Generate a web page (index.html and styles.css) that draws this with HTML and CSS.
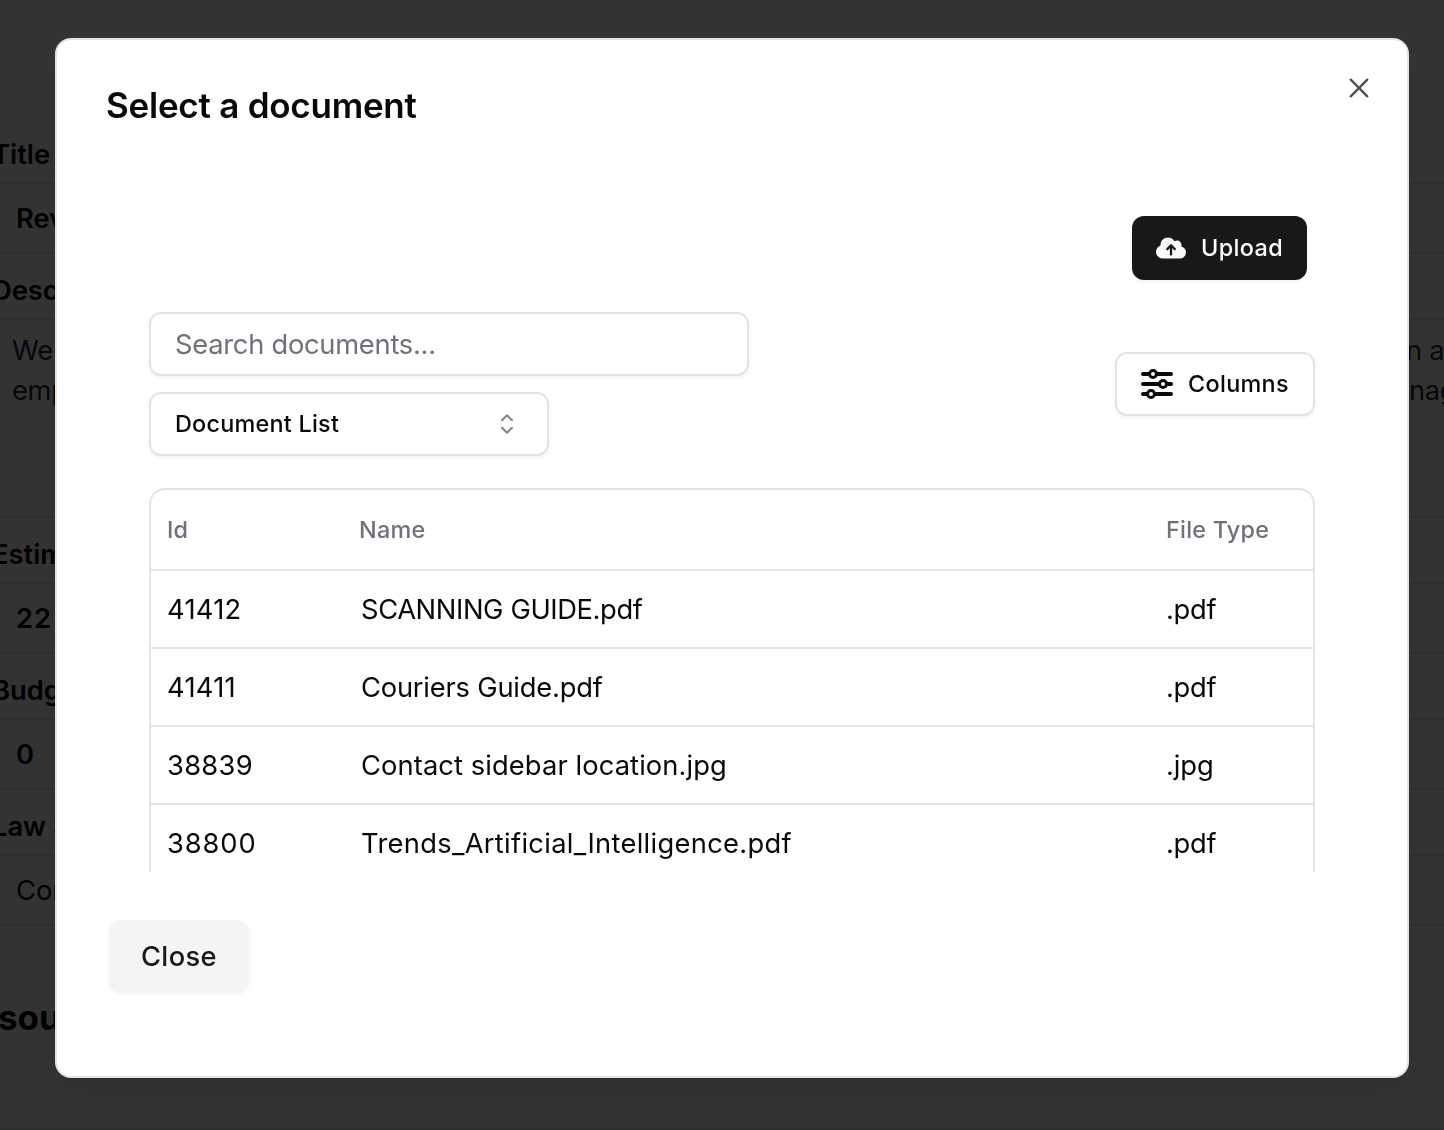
FILE: index.html
```html
<!DOCTYPE html>
<html lang="en">
<head>
<meta charset="utf-8">
<title>Select a document</title>
<link rel="stylesheet" href="styles.css">
</head>
<body>
<main class="page">
  <div class="field"><label class="label">Title</label><div class="value strong">Rev</div></div>
  <div class="field"><label class="label">Desc</label>
    <div class="value area">
      <p class="line"><span>We</span><span class="line-end">n a</span></p>
      <p class="line"><span>emp</span><span class="line-end second">nag</span></p>
    </div>
  </div>
  <div class="field"><label class="label">Estim</label><div class="value strong wide-digits">22</div></div>
  <div class="field"><label class="label">Budg</label><div class="value strong">0</div></div>
  <div class="field"><label class="label law">Law S</label><div class="value">Con</div></div>
  <h2 class="section">sour</h2>
  <div class="rule"></div>
</main>

<div class="overlay">
  <section class="dialog" role="dialog" aria-label="Select a document">
    <button class="dismiss" aria-label="Dismiss">
      <svg width="32" height="32" viewBox="0 0 15 15"><path fill="currentColor" d="M11.7816 4.03157C12.0062 3.80702 12.0062 3.44295 11.7816 3.2184C11.5571 2.99385 11.193 2.99385 10.9685 3.2184L7.50005 6.68682L4.03164 3.2184C3.80708 2.99385 3.44301 2.99385 3.21846 3.2184C2.99391 3.44295 2.99391 3.80702 3.21846 4.03157L6.68688 7.49999L3.21846 10.9684C2.99391 11.193 2.99391 11.557 3.21846 11.7816C3.44301 12.0061 3.80708 12.0061 4.03164 11.7816L7.50005 8.31316L10.9685 11.7816C11.193 12.0061 11.5571 12.0061 11.7816 11.7816C12.0062 11.557 12.0062 11.193 11.7816 10.9684L8.31322 7.49999L11.7816 4.03157Z"/></svg>
    </button>
    <h1 class="title">Select a document</h1>
    <div class="scroller">
      <button class="btn upload">
        <svg width="30" height="24" viewBox="0 0 640 512"><path fill="currentColor" d="M144 480C64.500 480 0 415.500 0 336c0-62.800 40.200-116.200 96.200-135.900c-.1-2.700-.2-5.400-.2-8.100c0-88.400 71.600-160 160-160c59.300 0 111 32.200 138.700 80.200C409.900 102 428.300 96 448 96c53 0 96 43 96 96c0 12.200-2.300 23.800-6.400 34.600C596 238.400 640 290.100 640 352c0 70.700-57.300 128-128 128H144zm79-217c-9.400 9.400-9.400 24.600 0 33.900s24.600 9.400 33.900 0l39-39V392c0 13.300 10.700 24 24 24s24-10.700 24-24V257.900l39 39c9.400 9.400 24.600 9.400 33.900 0s9.400-24.600 0-33.900l-80-80c-9.400-9.400-24.600-9.400-33.900 0l-80 80z"/></svg>
        <span class="text">Upload</span>
      </button>
      <div class="toolbar">
        <div class="filters">
          <input class="search" type="text" placeholder="Search documents...">
          <button class="btn select">
            <span class="text">Document List</span>
            <svg width="32" height="32" viewBox="0 0 32 32" fill="none" stroke="currentColor" stroke-width="2" stroke-linecap="round" stroke-linejoin="round"><path d="M11 12.300 16 7.300l5 5M11 19.700l5 5 5-5"/></svg>
          </button>
        </div>
        <button class="btn columns">
          <svg width="32" height="32" viewBox="0 0 32 32" stroke="currentColor" fill="#fff"><path stroke-width="4" stroke-linecap="round" d="M2 6h28M2 16h28M2 26h28"/><g stroke-width="3"><circle cx="12" cy="6" r="3.500"/><circle cx="22" cy="16" r="3.500"/><circle cx="10" cy="26" r="3.500"/></g></svg>
          <span class="text">Columns</span>
        </button>
      </div>
      <div class="table" role="table">
        <div class="row head"><span>Id</span><span>Name</span><span>File Type</span></div>
        <div class="row"><span class="id">41412</span><span class="caps">SCANNING GUIDE.pdf</span><span class="ext">.pdf</span></div>
        <div class="row"><span class="id">41411</span><span class="snug">Couriers Guide.pdf</span><span class="ext">.pdf</span></div>
        <div class="row"><span class="id">38839</span><span class="even">Contact sidebar location.jpg</span><span class="ext jpg">.jpg</span></div>
        <div class="row"><span class="id round">38800</span><span class="loose">Trends_Artificial_Intelligence.pdf</span><span class="ext">.pdf</span></div>
      </div>
    </div>
    <button class="close">Close</button>
  </section>
</div>
</body>
</html>
```
FILE: styles.css
```css
* { box-sizing: border-box; }

body {
  margin: 0;
  height: 1130px;
  overflow: hidden;
  background: #fff;
  color: #09090b;
  font-family: Inter, sans-serif;
  font-size: 27.3px;
}

h1, h2, p { margin: 0; }
button { font-family: inherit; cursor: pointer; }
svg { display: block; flex: none; }

/* Page behind the dialog */
.page { padding-top: 118px; height: 1130px; overflow: hidden; display: flex; flex-direction: column; }
.field { flex: none; }
.label { display: block; height: 64px; line-height: 74px; margin-left: -8px; font-weight: 600; color: #000; }
.value {
  height: 72px;
  padding: 0 16px;
  border: solid #e4e4e7;
  border-width: 2px 0;
  line-height: 70px;
}
.value.strong { font-weight: 600; color: #000; }
.wide-digits { letter-spacing: 1px; }
.value.area { height: 200px; padding: 11px 0 0 12px; line-height: 40px; color: #1f2937; }
.line { display: flex; justify-content: space-between; height: 40px; letter-spacing: -.3px; }
.line-end { width: 38px; white-space: nowrap; }
.line-end.second { width: 35px; }
.section { margin: 67px 0 0 -2px; line-height: 48px; font-size: 35px; font-weight: 700; color: #000; }
.rule { margin-top: auto; height: 2px; flex: none; background: #e4e4e7; }

/* Dialog */
.overlay { position: fixed; inset: 0; padding: 38px 35px 0 55px; background: rgba(0, 0, 0, .8); }
.dialog {
  position: relative;
  height: 1040px;
  padding: 47px 48px 48px;
  border: 2px solid #e4e4e7;
  border-radius: 16px;
  background: #fff;
  box-shadow: 0 20px 30px -6px rgba(0, 0, 0, .1), 0 8px 12px -8px rgba(0, 0, 0, .1);
}
.dismiss { position: absolute; top: 32px; right: 32px; padding: 0; border: 0; background: none; color: #09090b; opacity: .7; }
.title { padding-left: 1px; line-height: 36px; font-size: 35px; font-weight: 600; letter-spacing: -.24px; }

.scroller {
  display: flex;
  flex-direction: column;
  gap: 32px;
  height: 656px;
  margin-top: 93px;
  padding: 0 44px;
  overflow: hidden;
}

.btn {
  display: flex;
  align-items: center;
  height: 64px;
  flex: none;
  border: 2px solid #e4e4e7;
  border-radius: 12px;
  background: #fff;
  color: #09090b;
  font-size: 23.4px;
  font-weight: 500;
  letter-spacing: .24px;
  box-shadow: 0 2px 4px rgba(0, 0, 0, .05);
}
.text { padding-bottom: 2px; }
.upload {
  align-self: flex-end;
  width: 175px;
  margin-right: 8px;
  padding: 0 24px;
  gap: 15px;
  border: 0;
  background: #18181b;
  color: #fafafa;
  letter-spacing: .4px;
}

.toolbar { display: flex; justify-content: space-between; align-items: center; }
.filters { display: flex; flex-direction: column; gap: 16px; }
.search {
  width: 600px;
  height: 64px;
  padding: 0 24px;
  border: 2px solid #e4e4e7;
  border-radius: 12px;
  background: #fff;
  font: 400 27.3px Inter, sans-serif;
  letter-spacing: -.26px;
  box-shadow: 0 2px 4px rgba(0, 0, 0, .05);
}
.search::placeholder { color: #71717a; opacity: 1; }
.select { width: 400px; padding: 0 24px; justify-content: space-between; }
.select svg { opacity: .5; }
.columns { width: 200px; padding: 0 24px; gap: 15px; letter-spacing: .32px; }

.table { flex: none; border: 2px solid #e4e4e7; border-radius: 16px; }
.row {
  display: grid;
  grid-template-columns: 194px 805px 1fr;
  height: 78px;
  padding-left: 16px;
  border-bottom: 2px solid #e4e4e7;
  line-height: 77px;
}
.row.head { height: 81px; line-height: 80px; font-size: 23.4px; font-weight: 500; color: #71717a; letter-spacing: .24px; }
.row.head span:nth-child(2) { margin-left: -2px; }
.id { letter-spacing: .3px; }
.id.round { letter-spacing: .91px; }
.caps { letter-spacing: -.38px; }
.snug { letter-spacing: -.2px; }
.even { letter-spacing: .1px; }
.loose { letter-spacing: .31px; }
.ext { letter-spacing: -.3px; }
.ext.jpg { letter-spacing: -.1px; }

.close {
  display: block;
  width: 140px;
  height: 72px;
  margin: 48px 0 0 4px;
  padding: 0;
  border: 0;
  border-radius: 12px;
  background: #f4f4f5;
  color: #18181b;
  font-size: 27.3px;
  font-weight: 500;
  letter-spacing: .4px;
  box-shadow: 0 2px 4px rgba(0, 0, 0, .05);
}
```
